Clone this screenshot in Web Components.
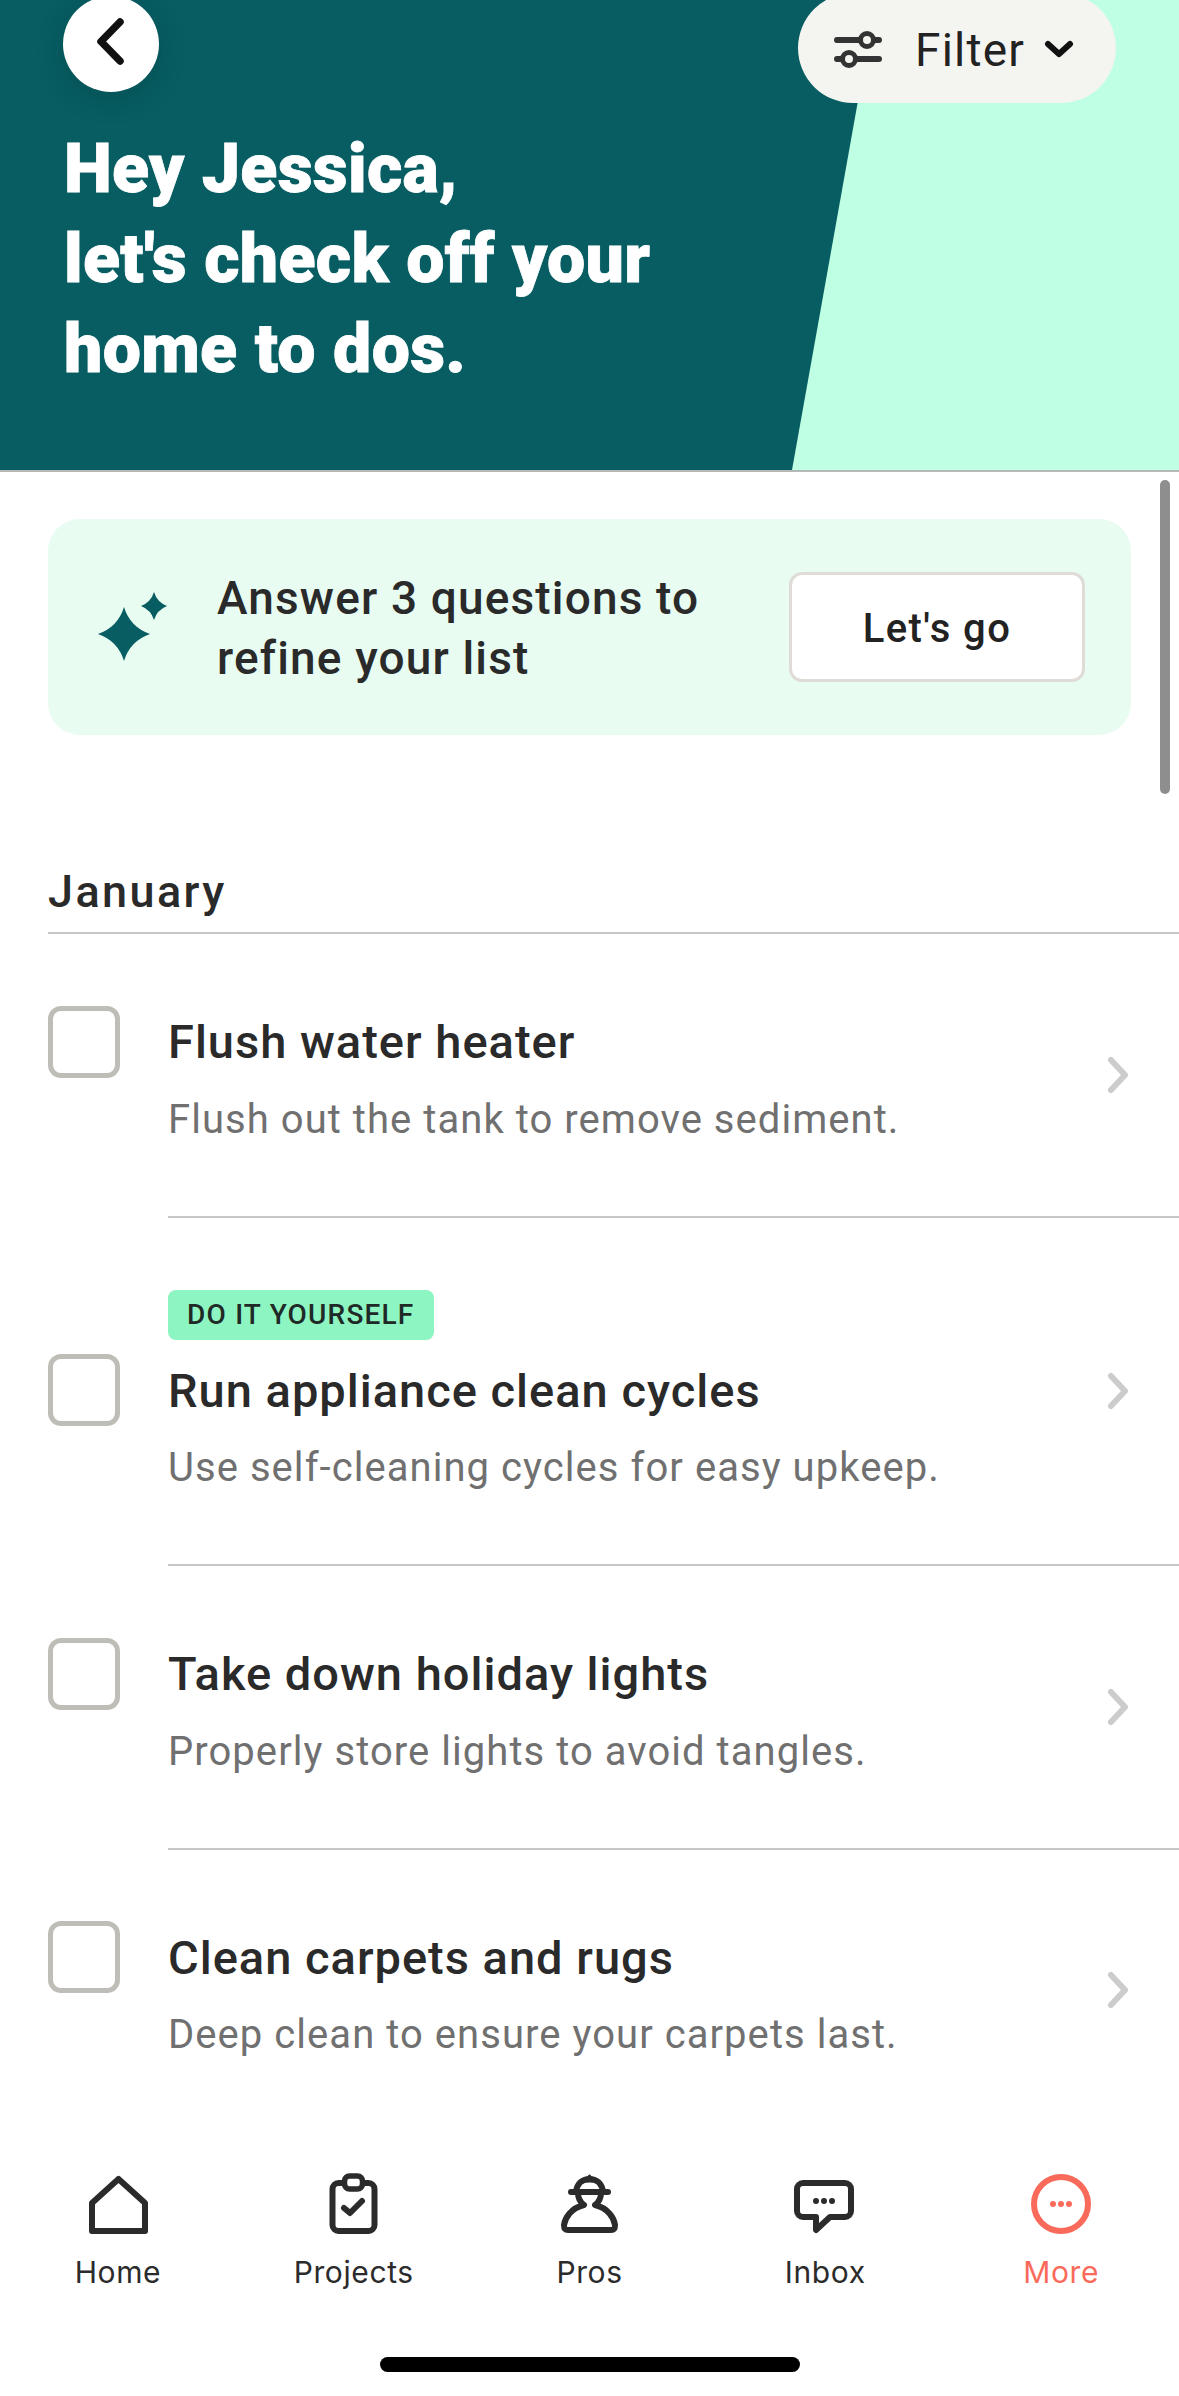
<!DOCTYPE html>
<html lang="en">
<head>
<meta charset="utf-8">
<title>Home to dos</title>
<style>
    html, body { margin: 0; padding: 0; background: #fff; }
    body { font-family: Roboto, "Noto Sans", sans-serif; color: #2a2a2a; }
</style>
</head>
<body>
<todo-app>
    <todo-header>Hey Jessica,<br>let's check off your<br>home to dos.</todo-header>
    <promo-card action="Let's go">Answer 3 questions to<br>refine your list</promo-card>
    <month-heading>January</month-heading>
    <todo-list>
        <todo-row>
            <span slot="title">Flush water heater</span>
            <span slot="sub">Flush out the tank to remove sediment.</span>
        </todo-row>
        <todo-row tagged>
            <span slot="tag">DO IT YOURSELF</span>
            <span slot="title">Run appliance clean cycles</span>
            <span slot="sub">Use self-cleaning cycles for easy upkeep.</span>
        </todo-row>
        <todo-row>
            <span slot="title">Take down holiday lights</span>
            <span slot="sub">Properly store lights to avoid tangles.</span>
        </todo-row>
        <todo-row last>
            <span slot="title">Clean carpets and rugs</span>
            <span slot="sub">Deep clean to ensure your carpets last.</span>
        </todo-row>
    </todo-list>
    <bottom-nav>
        <nav-item label="Home">
            <svg viewBox="0 0 72 72" fill="none" stroke="currentColor" stroke-width="6" stroke-linejoin="round"><path d="M36.5 11 L63 35 V63 H10 V35 Z"/></svg>
        </nav-item>
        <nav-item label="Projects">
            <svg viewBox="0 0 72 72" fill="none" stroke="currentColor" stroke-width="6" stroke-linecap="round" stroke-linejoin="round"><rect x="14.5" y="15" width="42" height="48" rx="6"/><rect x="26.5" y="8" width="18" height="13" rx="5" fill="#fff" stroke-width="5.5"/><path d="M26 40 L32 45 L44 33"/></svg>
        </nav-item>
        <nav-item label="Pros">
            <svg viewBox="0 0 72 72" fill="none" stroke="currentColor" stroke-width="6" stroke-linecap="round" stroke-linejoin="round"><path d="M23 24 C24 15 30 11 36.5 11 C43 11 49 15 50 24"/><path d="M18 24 H55"/><path d="M33 13 L36.5 8 L40 13 Z" fill="currentColor" stroke-width="3"/><path d="M25 25 C25 30 27 34 31 37 C18 40 12 50 11 57 C11 61 12 62 15 62 H58 C61 62 62 61 62 57 C61 50 55 40 42 37 C46 34 48 30 48 25"/></svg>
        </nav-item>
        <nav-item label="Inbox">
            <svg viewBox="0 0 72 72" fill="none" stroke="currentColor" stroke-width="6" stroke-linejoin="round"><path d="M14 15 H56 a6 6 0 0 1 6 6 V43 a6 6 0 0 1 -6 6 H41 L27 62 V49 H14 a6 6 0 0 1 -6 -6 V21 a6 6 0 0 1 6 -6 Z"/><g fill="currentColor" stroke="none"><circle cx="27" cy="33" r="3"/><circle cx="35" cy="33" r="3"/><circle cx="43" cy="33" r="3"/></g></svg>
        </nav-item>
        <nav-item label="More" active>
            <svg viewBox="0 0 72 72" fill="none" stroke="currentColor" stroke-width="6"><circle cx="36" cy="36" r="27"/><g fill="currentColor" stroke="none"><circle cx="28" cy="36" r="3"/><circle cx="36" cy="36" r="3"/><circle cx="44" cy="36" r="3"/></g></svg>
        </nav-item>
    </bottom-nav>
</todo-app>

<script>
// Page shell: a fixed phone sized column, the scroll thumb lies over the content
class TodoApp extends HTMLElement {
    constructor() {
        super()
        this.attachShadow({ mode: 'open' }).innerHTML = `
            <style>
                :host { display: flex; flex-direction: column; position: relative; width: 1179px; height: 2396px; overflow: hidden; background: #fff; }
                .thumb { position: absolute; left: 1160px; top: 480px; width: 10px; height: 314px; border-radius: 5px; background: #8e8e8e; }
            </style>
            <slot></slot>
            <div class="thumb"></div>
        `
    }
} // ---- End of TodoApp ---- //

class TodoHeader extends HTMLElement {
    constructor() {
        super()
        this.attachShadow({ mode: 'open' }).innerHTML = `
            <style>
                :host { display: block; position: relative; flex: none; height: 470px; overflow: hidden; background: #075d62; border-bottom: 2px solid #b4b8b7; }
                .wedge { position: absolute; inset: 0; background: #bfffe3; clip-path: polygon(876px 0, 1179px 0, 1179px 470px, 792px 470px); }
                .bar { position: relative; display: flex; justify-content: space-between; align-items: flex-start; margin-top: -7px; padding: 0 63px 0 63px; }
                .back { width: 96px; height: 96px; margin-top: 3px; border-radius: 50%; background: #fff; display: flex; align-items: center; justify-content: center; box-shadow: 0 6px 30px rgba(0,0,0,.14); }
                .back svg { width: 60px; height: 60px; }
                .filter { display: flex; align-items: center; box-sizing: border-box; width: 318px; height: 110px; padding: 4px 0 0 36px; border-radius: 55px; background: #f4f4f1; color: #222; font-size: 46px; letter-spacing: 1.2px; }
                .filter .sliders { width: 48px; height: 40px; margin-right: 33px; }
                .filter .caret { width: 30px; height: 20px; margin-left: 19px; }
                h1 { position: relative; margin: 21px 0 0 64px; font: 900 68px/90px Roboto, sans-serif; letter-spacing: .3px; -webkit-text-stroke: .8px #fff; color: #fff; }
            </style>
            <div class="wedge"></div>
            <div class="bar">
                <div class="back"><svg viewBox="0 0 60 60" fill="none" stroke="#111" stroke-width="7.5" stroke-linecap="round" stroke-linejoin="round"><path d="M39 8 L20 27.5 L39 47"/></svg></div>
                <div class="filter">
                    <svg class="sliders" viewBox="0 0 48 40" fill="none" stroke="#333"><path d="M3 10 H45 M3 29 H45" stroke-width="6" stroke-linecap="round"/><circle cx="33" cy="10" r="6.5" fill="#f4f4f1" stroke-width="5"/><circle cx="15" cy="29" r="6.5" fill="#f4f4f1" stroke-width="5"/></svg>
                    <span>Filter</span>
                    <svg class="caret" viewBox="0 0 30 20" fill="none" stroke="#111" stroke-width="6" stroke-linecap="round" stroke-linejoin="round"><path d="M4 4 L15 14 L26 4"/></svg>
                </div>
            </div>
            <h1><slot></slot></h1>
        `
    }
} // ---- End of TodoHeader ---- //

class PromoCard extends HTMLElement {
    constructor() {
        super()
        this.attachShadow({ mode: 'open' }).innerHTML = `
            <style>
                :host { display: flex; align-items: center; flex: none; box-sizing: border-box; height: 216px; margin: 47px 48px 0 48px; padding: 0 46px 0 50px; border-radius: 32px; background: #e8fcf2; }
                svg { flex: none; width: 70px; height: 70px; }
                .text { flex: 1; margin-left: 49px; margin-top: 1px; font-size: 46px; font-weight: 500; letter-spacing: 1.15px; line-height: 60px; color: #2a2a2a; }
                .go { flex: none; box-sizing: border-box; width: 296px; height: 110px; padding-top: 2px; display: flex; align-items: center; justify-content: center; border: 3px solid #dfdcd7; border-radius: 13px; background: #fff; font-size: 40px; font-weight: 500; letter-spacing: 1.4px; color: #222; }
            </style>
            <svg viewBox="0 0 70 70" fill="#075d62"><path d="M26 15 Q32 35 52 42 Q32 49 26 69 Q20 49 0 42 Q20 35 26 15 Z"/><path d="M56 0 Q59 10 69 14 Q59 18 56 28 Q53 18 43 14 Q53 10 56 0 Z"/></svg>
            <div class="text"><slot></slot></div>
            <div class="go"></div>
        `
        this.shadowRoot.querySelector('.go').textContent = this.getAttribute('action')
    }
} // ---- End of PromoCard ---- //

class MonthHeading extends HTMLElement {
    constructor() {
        super()
        this.attachShadow({ mode: 'open' }).innerHTML = `
            <style>
                :host { display: block; flex: none; margin: 127px 0 0 48px; padding-bottom: 10px; border-bottom: 2px solid #c8c8c8; font-size: 45px; font-weight: 500; letter-spacing: 2.4px; line-height: 60px; color: #2a2a2a; }
            </style>
            <slot></slot>
        `
    }
} // ---- End of MonthHeading ---- //

class TodoList extends HTMLElement {
    constructor() {
        super()
        this.attachShadow({ mode: 'open' }).innerHTML = `
            <style>:host { display: block; flex: 1; min-height: 0; overflow: hidden; }</style>
            <slot></slot>
        `
    }
} // ---- End of TodoList ---- //

class TodoRow extends HTMLElement {
    constructor() {
        super()
        this.attachShadow({ mode: 'open' }).innerHTML = `
            <style>
                :host { display: flex; padding-left: 48px; }
                .check { flex: none; box-sizing: border-box; width: 72px; height: 72px; margin: 71.5px 48px 0 0; border: 5px solid #bfbdb8; border-radius: 13px; }
                :host([tagged]) .check { margin-top: 136.5px; }
                .main { flex: 1; display: flex; align-items: center; border-bottom: 2px solid #c8c8c8; }
                :host([last]) .main { border-bottom-color: transparent; }
                .text { flex: 1; padding: 78px 0 68px; }
                :host([tagged]) .text { padding-top: 72px; }
                .tag { display: none; }
                :host([tagged]) .tag { display: inline-block; box-sizing: border-box; height: 50px; margin-bottom: 21px; padding: 0 19px; border-radius: 8px; background: #8df5c1; font-size: 28px; font-weight: 500; letter-spacing: 1.2px; line-height: 50px; color: #1f2a26; vertical-align: top; }
                .title { font-size: 47px; font-weight: 500; letter-spacing: 1px; line-height: 60px; color: #2a2a2a; }
                .sub { margin-top: 19.5px; font-size: 40px; line-height: 56px; letter-spacing: 1.05px; color: #707070; }
                svg { flex: none; width: 26px; height: 40px; margin-right: 48px; }
            </style>
            <div class="check"></div>
            <div class="main">
                <div class="text">
                    <div class="tag"><slot name="tag"></slot></div>
                    <div class="title"><slot name="title"></slot></div>
                    <div class="sub"><slot name="sub"></slot></div>
                </div>
                <svg viewBox="0 0 26 40" fill="none" stroke="#cccccc" stroke-width="6" stroke-linecap="round" stroke-linejoin="round"><path d="M6 5 L20 20 L6 35"/></svg>
            </div>
        `
    }
} // ---- End of TodoRow ---- //

class BottomNav extends HTMLElement {
    constructor() {
        super()
        this.attachShadow({ mode: 'open' }).innerHTML = `
            <style>
                :host { display: block; flex: none; height: 266px; background: #fff; }
                .items { display: grid; grid-template-columns: repeat(5, 1fr); padding-top: 38px; }
                .home-bar { width: 420px; height: 15px; margin: 65px auto 0; border-radius: 8px; background: #000; }
            </style>
            <div class="items"><slot></slot></div>
            <div class="home-bar"></div>
        `
    }
} // ---- End of BottomNav ---- //

class NavItem extends HTMLElement {
    constructor() {
        super()
        this.attachShadow({ mode: 'open' }).innerHTML = `
            <style>
                :host { display: flex; flex-direction: column; align-items: center; color: #2b2b2b; }
                :host([active]) { color: #fa6a5b; }
                ::slotted(svg) { display: block; width: 72px; height: 72px; }
                .label { margin-top: 12px; font: 400 30px/40px Inter, Roboto, sans-serif; letter-spacing: .6px; }
            </style>
            <slot></slot>
            <div class="label"></div>
        `
        this.shadowRoot.querySelector('.label').textContent = this.getAttribute('label')
    }
} // ---- End of NavItem ---- //

customElements.define('todo-app', TodoApp)
customElements.define('todo-header', TodoHeader)
customElements.define('promo-card', PromoCard)
customElements.define('month-heading', MonthHeading)
customElements.define('todo-list', TodoList)
customElements.define('todo-row', TodoRow)
customElements.define('bottom-nav', BottomNav)
customElements.define('nav-item', NavItem)
</script>
</body>
</html>
